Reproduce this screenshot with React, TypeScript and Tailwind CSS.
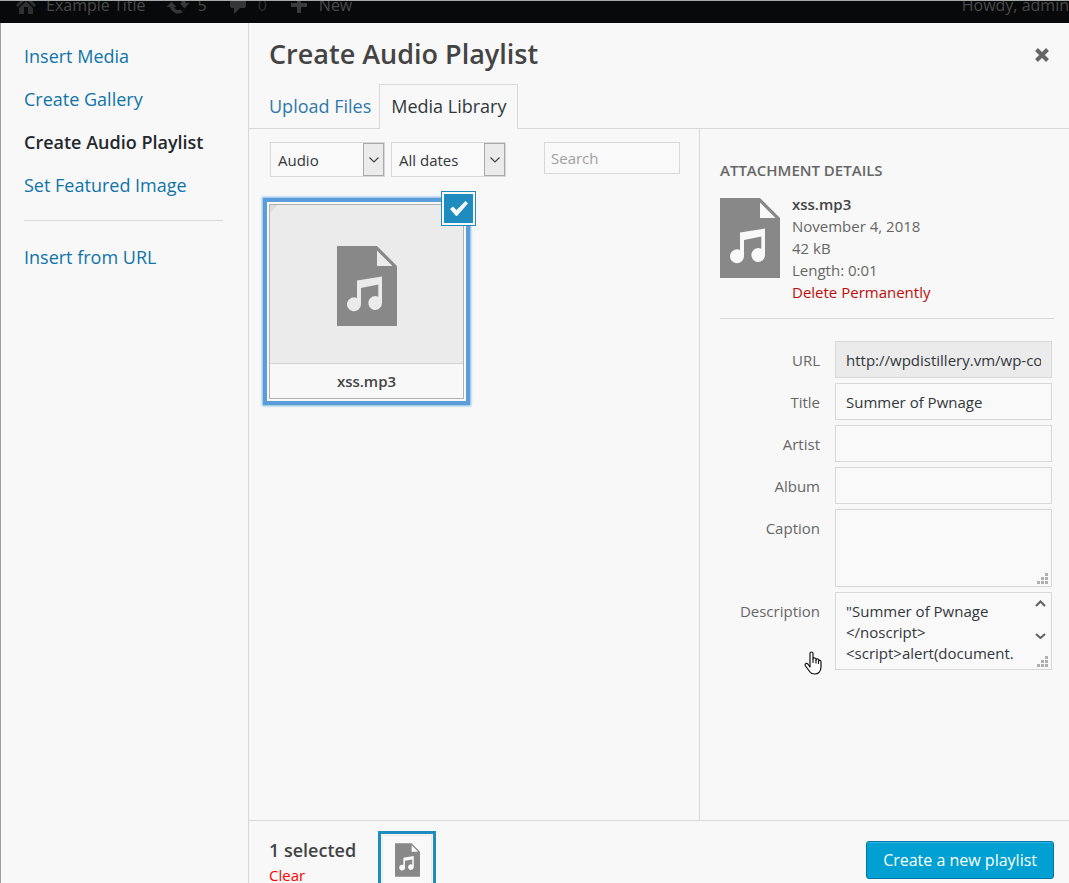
import React from "react";

function AudioFile({ className }: { className: string }) {
  return (
    <svg viewBox="0 0 60 80" className={className} aria-hidden="true">
      <path
        fill="#888"
        fillRule="evenodd"
        d="M0 0H40L60 20V80H0ZM40 4.500V20H55.500ZM20 34.500L45 30.500V57A6.800 7 0 1 1 41.300 50.800V38.500L24 42V58.300A7 7 0 1 1 20 52Z"
      />
    </svg>
  );
}

function AdminBar() {
  return (
    <header className="h-[23px] overflow-hidden border-t border-[#a5aaa8] bg-[#08090a] text-[16px] text-[#484a4b]">
      <div className="-mt-[13px] flex h-[34px] items-center pl-[16px] whitespace-nowrap">
        <svg viewBox="0 0 20 20" className="mr-[10px] h-[20px] w-[20px]" fill="#2e3032" aria-hidden="true">
          <path fillRule="evenodd" d="M10 0l3 3V1h3v5l4 4-2 2-8-8-8 8-2-2ZM10 6l7 7v6H3v-6ZM8 12v7h4v-7Z" />
        </svg>
        <a href="#site">Example Title</a>
        <svg viewBox="0 0 24 24" className="mr-[8px] ml-[20px] h-[24px] w-[24px]" fill="#34363a" aria-hidden="true">
          <path d="M5.500 8.500L10.500 14H8A4.500 4.500 0 0 0 14.500 16.500L17 19A8.500 8.500 0 0 1 4 14H.5ZM18.500 15.500L13.500 10H16A4.500 4.500 0 0 0 9.500 7.500L7 5A8.500 8.500 0 0 1 20 10H23.500Z" />
        </svg>
        <a href="#updates">5</a>
        <svg viewBox="0 0 18 20" className="mr-[11px] ml-[22px] h-[20px] w-[18px]" fill="#34363a" aria-hidden="true">
          <path d="M3 1h12a2 2 0 0 1 2 2v8a2 2 0 0 1-2 2h-4l-6 6v-6H3a2 2 0 0 1-2-2V3a2 2 0 0 1 2-2Z" />
        </svg>
        <a href="#comments" className="text-[#2e3032]">
          0
        </a>
        <svg viewBox="0 0 18 18" className="mr-[11px] ml-[23px] h-[18px] w-[18px]" fill="#3a3c3e" aria-hidden="true">
          <path d="M7 1h4v6h6v4h-6v6H7v-6H1V7h6Z" />
        </svg>
        <a href="#new">New</a>
        <a href="#profile" className="ml-auto">
          Howdy, admin
        </a>
      </div>
    </header>
  );
}

const menu = ["Insert Media", "Create Gallery", "Create Audio Playlist", "Set Featured Image"];

function Sidebar() {
  return (
    <nav className="w-[248px] shrink-0 border-r border-[#d8d8d8] pt-3 pr-[25px] pl-[23px] text-[18px] text-[#0f74a8]">
      {menu.map((m) => (
        <a
          key={m}
          href="#media"
          className={
            "flex h-[43px] items-center whitespace-nowrap " + (m === "Create Audio Playlist" ? "font-semibold text-[#23282d]" : "")
          }
        >
          {m}
        </a>
      ))}
      <hr className="mt-[13px] mb-[15px] border-[#d8d8d8]" />
      <a href="#url" className="flex h-[43px] items-center">
        Insert from URL
      </a>
    </nav>
  );
}

function Filter({ label, value }: { label: string; value: string }) {
  return (
    <div className="relative h-[35px] w-[115px]">
      <select
        aria-label={label}
        className="h-full w-full appearance-none border border-[#d8d8d8] bg-[#f9f9f9] pt-px pl-[7px] text-[15px] text-[#32373c]"
      >
        <option>{value}</option>
      </select>
      <span className="pointer-events-none absolute top-px right-px bottom-px flex w-[21px] items-center justify-center border border-[#aaa] bg-[#ebebeb]">
        <svg viewBox="0 0 10 6" className="h-[6px] w-[10px]" fill="none" stroke="#444" strokeWidth="1.2" aria-hidden="true">
          <path d="M.5 .5L5 5L9.500 .5" />
        </svg>
      </span>
    </div>
  );
}

function Library() {
  return (
    <section className="min-w-0 flex-1 border-r border-[#d8d8d8]">
      <div className="flex items-start gap-[6px] pt-[13px] pr-[19px] pl-[21px]">
        <Filter label="Filter by type" value="Audio" />
        <Filter label="Filter by date" value="All dates" />
        <input
          type="search"
          aria-label="Search"
          placeholder="Search"
          className="ml-auto h-[32px] w-[136px] border border-[#d8d8d8] bg-[#f9f9f9] px-[6px] text-[15px] placeholder:text-[#a0a0a0]"
        />
      </div>
      <div className="relative mt-[21px] ml-[14px] w-[207px] border-4 border-[#5b9dd9] p-[2px] shadow-[0_0_2px_1px_#7db8e8]">
        <div className="border border-[#b2b2b2]">
          <div className="relative flex h-[159px] items-center justify-center border-b border-[#d4d4d4] bg-[#ebebeb] pt-[4px]">
            <svg viewBox="0 0 8 8" className="absolute top-0 left-0 h-[8px] w-[8px]" aria-hidden="true">
              <path d="M0 0H8L0 8Z" fill="#ddd" />
            </svg>
            <AudioFile className="h-[80px] w-[60px]" />
          </div>
          <div className="flex h-[34px] items-center justify-center text-[15px] font-semibold text-[#444]">xss.mp3</div>
        </div>
        <button
          type="button"
          aria-label="Deselect"
          className="absolute -top-[11px] -right-[10px] h-[35px] w-[35px] border border-[#1e8cbe] bg-[#f9f9f9] p-[2px]"
        >
          <span className="flex h-full w-full items-center justify-center bg-[#1e8cbe]">
            <svg viewBox="0 0 18 15" className="h-[15px] w-[18px]" fill="#f8f8f8" aria-hidden="true">
              <path d="M0 8L3 5.500L6.500 9L15.500 0L18 2.500L7 15H6Z" />
            </svg>
          </span>
        </button>
      </div>
    </section>
  );
}

function Grip() {
  return (
    <svg
      viewBox="0 0 11 11"
      className="pointer-events-none absolute right-[4px] bottom-[3px] h-[11px] w-[11px]"
      fill="#b0b0b0"
      aria-hidden="true"
    >
      <path d="M8 0h3v3h-3ZM8 4h3v3h-3ZM4 4h3v3H4ZM8 8h3v3h-3ZM4 8h3v3H4ZM0 8h3v3H0Z" />
    </svg>
  );
}

const field = "block w-full border border-[#d8d8d8] px-[10px] text-[15px] text-[#32373c]";

function TextField({ name, value, readOnly }: { name: string; value?: string; readOnly?: boolean }) {
  return (
    <div className="flex gap-[15px]">
      <label htmlFor={name} className="w-[100px] pt-[9px] text-right leading-[21px]">
        {name}
      </label>
      <div className="min-w-0 flex-1">
        <input
          id={name}
          defaultValue={value}
          readOnly={readOnly}
          className={field + " h-[37px] " + (readOnly ? "bg-[#ebebeb]" : "bg-[#f9f9f9]")}
        />
      </div>
    </div>
  );
}

function AreaField({ name, value }: { name: string; value?: string }) {
  return (
    <div className="flex gap-[15px]">
      <label htmlFor={name} className="w-[100px] pt-[9px] text-right leading-[21px]">
        {name}
      </label>
      <div className="relative min-w-0 flex-1">
        <textarea
          id={name}
          defaultValue={value}
          className={field + " h-[78px] resize-none overflow-hidden bg-[#f9f9f9] pt-2 leading-[21px]"}
        />
        {value && (
          <svg
            viewBox="0 0 11 40"
            className="pointer-events-none absolute top-[7px] right-[6px] h-[40px] w-[11px]"
            fill="none"
            stroke="#606060"
            strokeWidth="2"
            aria-hidden="true"
          >
            <path d="M1 7L5.500 2.500L10 7M1 35L5.500 39L10 35" />
          </svg>
        )}
        <Grip />
      </div>
    </div>
  );
}

function Details() {
  return (
    <aside className="relative w-[369px] shrink-0 pt-[30px] pr-[15px] pl-[20px] text-[15px] text-[#666]">
      <h2 className="leading-[22px] font-semibold uppercase">Attachment Details</h2>
      <div className="mt-[12px] flex gap-3 border-b border-[#d8d8d8] pb-[15px]">
        <AudioFile className="mt-[5px] h-[80px] w-[60px]" />
        <div className="leading-[22px]">
          <div className="font-semibold text-[#444]">xss.mp3</div>
          <div>November 4, 2018</div>
          <div>42 kB</div>
          <div>Length: 0:01</div>
          <button type="button" className="block text-[#bc0b0b]">
            Delete Permanently
          </button>
        </div>
      </div>
      <form className="mt-[22px] flex flex-col gap-[5px] pr-[2px]">
        <TextField name="URL" value="http://wpdistillery.vm/wp-content/uploads/2018/11/xss.mp3" readOnly />
        <TextField name="Title" value="Summer of Pwnage" />
        <TextField name="Artist" />
        <TextField name="Album" />
        <AreaField name="Caption" />
        <AreaField name="Description" value={'"Summer of Pwnage\n</noscript>\n<script>alert(document.'} />
      </form>
      <svg viewBox="0 0 18 24" className="pointer-events-none absolute top-[522px] left-[104px] h-[24px] w-[18px]" aria-hidden="true">
        <path
          d="M6 14V2.500Q6 1 7.500 1T9 2.500V8Q9.500 6.500 11 7T12 9Q12.500 7.500 14 8T14.500 10Q17 8.500 17 11V16Q17 19 15 21.500Q13.500 23 10.500 23T6 21L1.500 15Q.5 13 2 12.500T4.500 14L6 16Z"
          fill="#fff"
          stroke="#111"
          strokeWidth="1.2"
          strokeLinejoin="round"
        />
        <path d="M9 8V12M12 9V12.500M14.500 10V13" fill="none" stroke="#111" strokeWidth="1.100" />
      </svg>
    </aside>
  );
}

export default function App() {
  return (
    <div className="flex h-screen flex-col overflow-hidden bg-[#f8f8f8] font-['Open_Sans',sans-serif]">
      <AdminBar />
      <div className="flex min-h-0 flex-1 border-l border-[#a0a0a0]">
        <Sidebar />
        <main className="flex min-w-0 flex-1 flex-col">
          <div className="flex h-[61px] items-center justify-between pt-[2px] pr-[19px] pl-[20px]">
            <h1 className="text-[27px] font-semibold text-[#444]">Create Audio Playlist</h1>
            <button type="button" aria-label="Close" className="flex h-4 w-4 items-center justify-center">
              <svg viewBox="0 0 14 14" className="h-[14px] w-[14px]" stroke="#666" strokeWidth="4" aria-hidden="true">
                <path d="M1.500 1.500L12.500 12.500M12.500 1.500L1.500 12.500" />
              </svg>
            </button>
          </div>
          <div className="flex h-[45px] border-b border-[#d8d8d8] pl-[20px] text-[18px] whitespace-nowrap">
            <button type="button" className="pr-[8px] text-[#2f78ab]">
              Upload Files
            </button>
            <button type="button" className="-mb-px border border-b-0 border-[#d8d8d8] bg-[#f8f8f8] px-[11px] pb-px text-[#32373c]">
              Media Library
            </button>
          </div>
          <div className="flex min-h-0 flex-1">
            <Library />
            <Details />
          </div>
          <footer className="flex h-[63px] shrink-0 items-start overflow-hidden border-t border-[#d8d8d8] pr-[15px] pl-[20px]">
            <div className="pt-[17px]">
              <div className="text-[18px] leading-[25px] font-semibold text-[#444]">1 selected</div>
              <button type="button" className="block text-[15px] leading-[25px] text-[#f00]">
                Clear
              </button>
            </div>
            <div className="mt-[10px] ml-[22px] h-[58px] w-[58px] shrink-0 border-3 border-[#1e8cbe] bg-[#f9f9f9] p-px">
              <div className="flex h-full w-full items-start justify-center border border-[#e9e9e9] pt-[7px]">
                <AudioFile className="h-[34px] w-[25px]" />
              </div>
            </div>
            <button
              type="button"
              className="mt-[20px] ml-auto h-[38px] rounded-[3px] border border-[#0073aa] bg-[#00a0d2] px-[16px] text-[16px] text-white shadow-[inset_0_1px_0_#36b4de]"
            >
              Create a new playlist
            </button>
          </footer>
        </main>
      </div>
    </div>
  );
}
